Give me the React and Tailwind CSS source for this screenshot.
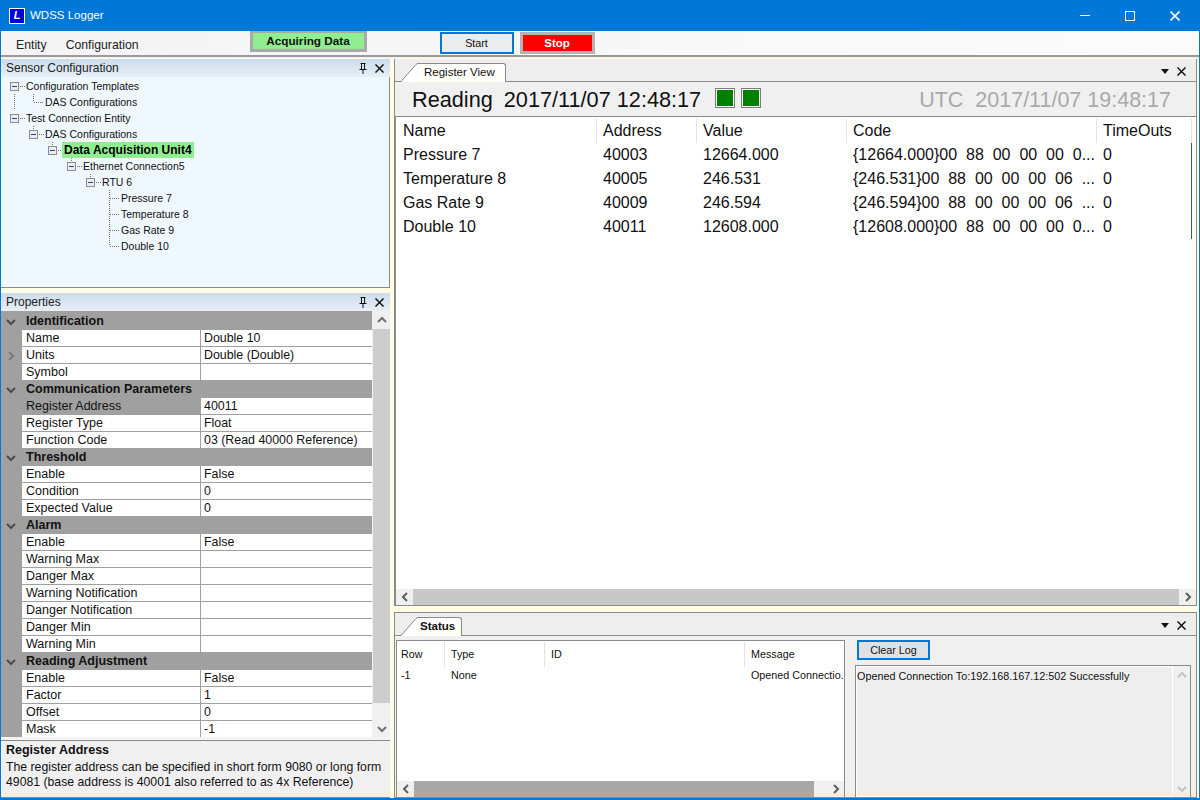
import React from "react";

const treeRows = [
  { label: "Configuration Templates", level: 0 },
  { label: "DAS Configurations", level: 1, leaf: true, last: true, guide: true },
  { label: "Test Connection Entity", level: 0 },
  { label: "DAS Configurations", level: 1 },
  { label: "Data Acquisition Unit4", level: 2, active: true },
  { label: "Ethernet Connection5", level: 3 },
  { label: "RTU 6", level: 4 },
  { label: "Pressure 7", level: 5, leaf: true },
  { label: "Temperature 8", level: 5, leaf: true },
  { label: "Gas Rate 9", level: 5, leaf: true },
  { label: "Double 10", level: 5, leaf: true, last: true },
];

const propertyRows = [
  { group: "Identification" },
  { name: "Name", value: "Double 10" },
  { name: "Units", value: "Double (Double)", marker: true },
  { name: "Symbol", value: "" },
  { group: "Communication Parameters" },
  { name: "Register Address", value: "40011", selected: true },
  { name: "Register Type", value: "Float" },
  { name: "Function Code", value: "03 (Read 40000 Reference)" },
  { group: "Threshold" },
  { name: "Enable", value: "False" },
  { name: "Condition", value: "0" },
  { name: "Expected Value", value: "0" },
  { group: "Alarm" },
  { name: "Enable", value: "False" },
  { name: "Warning Max", value: "" },
  { name: "Danger Max", value: "" },
  { name: "Warning Notification", value: "" },
  { name: "Danger Notification", value: "" },
  { name: "Danger Min", value: "" },
  { name: "Warning Min", value: "" },
  { group: "Reading Adjustment" },
  { name: "Enable", value: "False" },
  { name: "Factor", value: "1" },
  { name: "Offset", value: "0" },
  { name: "Mask", value: "-1" },
];

const registers = [
  ["Pressure 7", "40003", "12664.000", "{12664.000}00  88  00  00  00  0...", "0"],
  ["Temperature 8", "40005", "246.531", "{246.531}00  88  00  00  00  06  ...", "0"],
  ["Gas Rate 9", "40009", "246.594", "{246.594}00  88  00  00  00  06  ...", "0"],
  ["Double 10", "40011", "12608.000", "{12608.000}00  88  00  00  00  0...", "0"],
];

// --- Small drawings ---
const Chevron = ({ dir = "down", color = "#5f5f5f" }) => {
  const points = {
    down: "1,3 5,7 9,3",
    up: "1,7 5,3 9,7",
    left: "7,1 3,5 7,9",
    right: "3,1 7,5 3,9",
  }[dir];
  return (
    <svg width="10" height="10" viewBox="0 0 10 10" className="block">
      <polyline points={points} fill="none" stroke={color} strokeWidth="2" />
    </svg>
  );
};

const CloseIcon = ({ size = 9, color = "#111" }) => (
  <svg width={size} height={size} viewBox="0 0 10 10" className="block">
    <path d="M0.5 0.5L9.5 9.5M9.5 0.5L0.5 9.5" stroke={color} strokeWidth="1.6" fill="none" />
  </svg>
);

const PinIcon = () => (
  <svg width="8" height="11" viewBox="0 0 8 11" className="block">
    <path d="M1.5 0.5H6.5M2.5 0.5V6M5.5 0.5V6M0.5 6.5H7.5M4 7V11" stroke="#111" strokeWidth="1" fill="none" />
  </svg>
);

const DropIcon = () => (
  <svg width="8" height="5" viewBox="0 0 8 5" className="block">
    <path d="M0 0H8L4 5Z" fill="#111" />
  </svg>
);

const DockHeader = ({ title }) => (
  <div className="h-[18px] shrink-0 flex items-center justify-between pl-[5px] pr-[6px] bg-gradient-to-b from-[#cbdcec] to-[#e8eff6] text-[12px] text-[#222]">
    <span>{title}</span>
    <div className="flex items-center gap-[8px]">
      <PinIcon />
      <CloseIcon size={9} />
    </div>
  </div>
);

const TabStrip = ({ label, bold, width }) => (
  <div className="h-[23px] shrink-0 flex items-end justify-between bg-[#eeeeee] border-b border-[#8a8a8a] pl-[6px] pr-[10px]">
    <div className="flex items-end h-[19px] -mb-px">
      <svg width="17" height="19" viewBox="0 0 17 19" className="block shrink-0">
        <path d="M0 19L15 1.5Q16 0.5 17 0.5V19Z" fill="#ffffff" />
        <path d="M0 18.5L15 1.5Q16 0.5 17 0.5" fill="none" stroke="#8a8a8a" />
      </svg>
      <div
        style={{ width }}
        className={`h-[19px] bg-gradient-to-b from-white to-[#fffff4] border-t border-r border-[#8a8a8a] rounded-tr-[3px] flex items-center text-[#111] ${bold ? "pl-[2px] font-bold text-[11.5px]" : "pl-[6px] text-[11.5px]"}`}
      >
        {label}
      </div>
    </div>
    <div className="flex items-center gap-[8px] h-[20px]">
      <DropIcon />
      <CloseIcon size={9} />
    </div>
  </div>
);

// --- Tree ---
const TreeRow = ({ label, level, leaf, last, guide, active }) => {
  const x = 9 + level * 19;
  return (
    <div className="h-[16px] flex items-center">
      <svg width={x + 16} height="16" viewBox={`0 0 ${x + 16} 16`} className="block shrink-0" shapeRendering="crispEdges">
        {guide && <path d="M13.5 0V16" stroke="#777" strokeDasharray="1 1" />}
        {leaf ? (
          <path
            d={`M${x + 4.5} 0V${last ? 8 : 16}M${x + 5} 8.5H${x + 15}`}
            stroke="#777"
            strokeDasharray="1 1"
            fill="none"
          />
        ) : (
          <g>
            {level > 0 && <path d={`M${x + 4.5} 0V4`} stroke="#777" strokeDasharray="1 1" />}
            <rect x={x + 0.5} y="4.5" width="8" height="8" fill="#e8ecf4" stroke="#8d8d8d" />
            <path d={`M${x + 2} 8.5H${x + 7}`} stroke="#36427a" />
            <path d={`M${x + 10} 8.5H${x + 15}`} stroke="#777" strokeDasharray="1 1" />
          </g>
        )}
      </svg>
      <span
        className={
          active
            ? "bg-[#90ee90] font-bold text-[12px] text-black px-[2px] -ml-[2px] h-[16px] leading-[16px]"
            : "text-[10.5px] text-[#111] leading-[16px]"
        }
      >
        {label}
      </span>
    </div>
  );
};

// --- Property grid ---
const PropertyRow = ({ row }) => {
  if (row.group) {
    return (
      <div className="h-[17px] first:h-[19px] first:pt-[2px] flex items-center bg-[#a0a0a0]">
        <div className="w-[21px] pl-[5px] shrink-0">
          <Chevron dir="down" color="#4a4a4a" />
        </div>
        <span className="pl-[4px] font-bold text-[12.5px] text-[#111] whitespace-nowrap">{row.group}</span>
      </div>
    );
  }
  return (
    <div className="h-[17px] flex bg-[#a0a0a0]">
      <div className="w-[21px] shrink-0 flex items-center pl-[5px]">
        {row.marker && <Chevron dir="right" color="#7a7a7a" />}
      </div>
      <div className={`w-[178px] shrink-0 pl-[4px] text-[12.5px] leading-[17px] text-[#111] border-b border-[#a0a0a0] ${row.selected ? "" : "bg-white"}`}>
        {row.name}
      </div>
      <div className="w-px shrink-0 bg-[#a0a0a0]" />
      <div className="flex-1 pl-[3px] text-[12.4px] leading-[17px] text-[#111] bg-white border-b border-[#a0a0a0] whitespace-nowrap">
        {row.value}
      </div>
    </div>
  );
};

const VScroll = ({ disabled, children }) => (
  <div className="w-[17px] shrink-0 flex flex-col bg-[#f0f0f0]">
    <div className="h-[18px] flex items-center justify-center shrink-0">
      <Chevron dir="up" color={disabled ? "#c4c4c4" : "#707070"} />
    </div>
    <div className="flex-1">{children}</div>
    <div className="h-[17px] flex items-center justify-center shrink-0">
      <Chevron dir="down" color={disabled ? "#c4c4c4" : "#707070"} />
    </div>
  </div>
);

const HScroll = ({ thumbClass }) => (
  <div className="h-[16px] shrink-0 flex bg-[#f0f0f0]">
    <div className="w-[17px] flex items-center justify-center shrink-0">
      <Chevron dir="left" />
    </div>
    <div className="flex-1">
      <div className={thumbClass} />
    </div>
    <div className="w-[17px] flex items-center justify-center shrink-0">
      <Chevron dir="right" />
    </div>
  </div>
);

const Led = () => (
  <div className="w-[20px] h-[20px] border border-[#7c7c7c] bg-white p-px">
    <div className="w-full h-full bg-[#008000]" />
  </div>
);

export default function App() {
  return (
    <div className="w-[1200px] h-[800px] flex flex-col overflow-hidden bg-[#0078d7] px-px pb-[2px] font-['Liberation_Sans',Arial,sans-serif]">
      {/* Title bar */}
      <div className="h-[31px] shrink-0 flex items-center justify-between text-white">
        <div className="flex items-center">
          <div className="ml-[8px] w-[16px] h-[16px] bg-[#0000dd] border border-white flex items-center justify-center text-[11px] font-bold italic leading-none">
            L
          </div>
          <span className="ml-[5px] text-[11.5px]">WDSS Logger</span>
        </div>
        <div className="flex items-center gap-[35px] pr-[19px]">
          <div className="w-[10px] h-px bg-white" />
          <div className="w-[10px] h-[10px] border border-white" />
          <CloseIcon size={10} color="#ffffff" />
        </div>
      </div>

      {/* Menu and toolbar */}
      <div className="h-[24px] shrink-0 flex bg-gradient-to-r from-[#f4f4f4] to-[#fbfbfb] text-[12.25px] text-[#222]">
        <span className="ml-[15px] mt-[5px]">Entity</span>
        <span className="ml-[19px] mt-[5px]">Configuration</span>
        <div className="ml-[111px] w-[117px] h-[21px] border-[3px] border-t-[2px] border-[#a9a9a9] bg-[#90ee90] text-[11.75px] font-bold text-center leading-[15px] text-[#111]">
          Acquiring Data
        </div>
        <div className="ml-[73px] mt-px w-[74px] h-[22px] border-2 border-[#0078d7] bg-[#ececec] text-[10.75px] text-center leading-[18px] text-[#111]">
          Start
        </div>
        <div className="ml-[6px] mt-px w-[75px] h-[22px] border-[3px] border-[#b4b4b4] bg-[#ff0000] text-[11.5px] font-bold text-center text-white leading-[16px]">
          Stop
        </div>
      </div>
      <div className="h-[3px] shrink-0 bg-[#f0f0f0] border-t-2 border-[#9a9a9a]" />

      {/* Docked panels */}
      <div className="flex-1 min-h-0 flex bg-[#fffde6]">
        {/* Left column */}
        <div className="w-[389px] shrink-0 flex flex-col">
          <div className="h-[229px] shrink-0 mt-px flex flex-col">
            <DockHeader title="Sensor Configuration" />
            <div className="flex-1 bg-[#f0f8ff] border-r border-b border-[#8a8a8a] pt-[1px]">
              {treeRows.map((row, i) => (
                <TreeRow key={i} {...row} />
              ))}
            </div>
          </div>
          <div className="h-[5px] shrink-0" />
          <div className="flex-1 min-h-0 flex flex-col">
            <DockHeader title="Properties" />
            <div className="h-[426px] shrink-0 flex overflow-hidden">
              <div className="w-[371px] shrink-0 overflow-hidden">
                {propertyRows.map((row, i) => (
                  <PropertyRow key={i} row={row} />
                ))}
              </div>
              <div className="w-px bg-[#f0f0f0]" />
              <VScroll>
                <div className="h-[374px] bg-[#cdcdcd]" />
              </VScroll>
            </div>
            <div className="h-[3px] shrink-0 bg-[#f4f4f4]" />
            <div className="flex-1 bg-[#f0f0f0] border-t border-b border-[#8a8a8a] pl-[5px] pt-[2px] text-[12.25px] leading-[15px] text-[#111]">
              <div className="font-bold text-[12.5px]">Register Address</div>
              <div className="mt-[2px]">The register address can be specified in short form 9080 or long form</div>
              <div>49081 (base address is 40001 also referred to as 4x Reference)</div>
            </div>
          </div>
        </div>

        <div className="w-[4px] shrink-0" />

        {/* Right column */}
        <div className="flex-1 min-w-0 flex flex-col pr-[2px]">
          <div className="h-[547px] shrink-0 mt-px flex flex-col border-l border-r border-b border-[#8a8a8a]">
            <TabStrip label="Register View" width={88} />
            <div className="h-[35px] shrink-0 flex items-center justify-between bg-[#f0f0f0] border-b border-[#8a8a8a] pl-[17px] pr-[25px] pt-[2px] text-[21.7px]">
              <div className="flex items-center text-[#111]">
                <span>Reading</span>
                <span className="ml-[11px]">2017/11/07 12:48:17</span>
                <div className="ml-[14px] flex gap-[6px] -mt-[5px]">
                  <Led />
                  <Led />
                </div>
              </div>
              <div className="text-[#a9a9a9] text-[21.5px] whitespace-pre">UTC  2017/11/07 19:48:17</div>
            </div>
            <div className="flex-1 min-h-0 flex flex-col bg-white border-l border-[#8a8a8a]">
              <div className="h-[26px] shrink-0 pt-[2px] grid grid-cols-[201px_100px_150px_250px_95px] text-[16px] text-[#111]">
                {["Name", "Address", "Value", "Code", "TimeOuts"].map((h) => (
                  <div key={h} className="pl-[6px] first:pl-[7px] border-r border-[#e3e3e3] leading-[24px]">
                    {h}
                  </div>
                ))}
              </div>
              <div className="flex-1 min-h-0">
                {registers.map((r) => (
                  <div key={r[0]} className="h-[24px] grid grid-cols-[201px_100px_150px_250px_94px_2px] text-[16px] leading-[24px] text-[#111]">
                    {r.map((cell, i) => (
                      <div key={i} className="pl-[6px] first:pl-[7px] whitespace-pre overflow-hidden">
                        {cell}
                      </div>
                    ))}
                    <div className="w-px bg-[#2f6f2f]" />
                  </div>
                ))}
              </div>
              <HScroll thumbClass="h-full bg-[#c8c8c8]" />
            </div>
          </div>
          <div className="h-[6px] shrink-0" />

          <div className="flex-1 min-h-0 flex flex-col border-l border-r border-t border-b border-[#8a8a8a]">
            <TabStrip label="Status" bold width={44} />
            <div className="flex-1 min-h-0 flex bg-[#f0f0f0] pt-[4px] pl-px">
              <div className="w-[449px] shrink-0 flex flex-col bg-white border-l border-t border-r border-[#8a8a8a]">
                <div className="h-[25px] shrink-0 grid grid-cols-[48px_100px_200px_99px] text-[10.75px] text-[#111] leading-[25px] pt-px">
                  {["Row", "Type", "ID", "Message"].map((h) => (
                    <div key={h} className="pl-[6px] first:pl-[4px] border-r border-[#e3e3e3] last:border-r-0">
                      {h}
                    </div>
                  ))}
                </div>
                <div className="flex-1 grid grid-cols-[48px_100px_200px_99px] text-[10.75px] text-[#111] leading-[18px]">
                  <div className="pl-[4px]">-1</div>
                  <div className="pl-[6px]">None</div>
                  <div />
                  <div className="pl-[6px] whitespace-nowrap">Opened Connectio.</div>
                </div>
                <HScroll thumbClass="h-full w-[400px] bg-[#a8a8a8]" />
              </div>
              <div className="flex-1 flex flex-col pl-[10px] pr-[5px]">
                <div className="ml-[2px] w-[73px] h-[20px] shrink-0 border-2 border-[#0078d7] bg-[#e1e1e1] text-[10.75px] text-center leading-[16px] text-[#111]">
                  Clear Log
                </div>
                <div className="flex-1 mt-[5px] flex bg-[#eeeeee] border border-[#8a8a8a] border-b-0">
                  <div className="flex-1 border border-white pt-px text-[10.8px] leading-[16px] text-[#111] whitespace-nowrap">
                    Opened Connection To:192.168.167.12:502 Successfully
                  </div>
                  <VScroll disabled />
                </div>
              </div>
            </div>
          </div>
        </div>
      </div>
    </div>
  );
}
